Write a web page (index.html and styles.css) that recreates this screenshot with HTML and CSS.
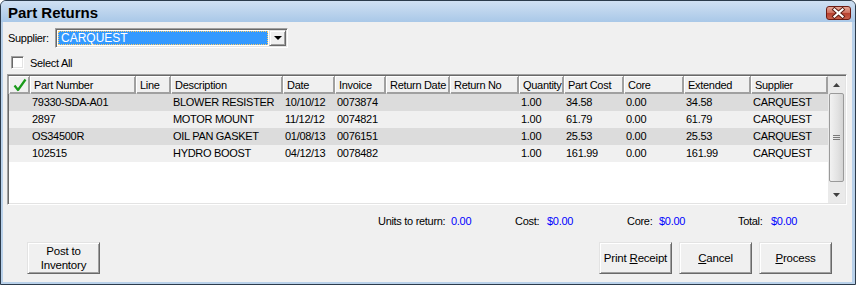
FILE: index.html
```html
<!DOCTYPE html>
<html>
<head>
<meta charset="utf-8">
<link rel="stylesheet" href="styles.css">
</head>
<body>
<div class="window">
  <div class="titlebar">
    <span class="title">Part Returns</span>
    <span class="close">
      <svg width="25" height="14" viewBox="0 0 25 14">
        <path d="M8.5 3.5 L16.5 10.5 M16.5 3.5 L8.5 10.5" stroke="#5a1a12" stroke-width="4" stroke-linecap="square"/>
        <path d="M8.5 3.5 L16.5 10.5 M16.5 3.5 L8.5 10.5" stroke="#ffffff" stroke-width="2.2" stroke-linecap="square"/>
      </svg>
    </span>
  </div>
  <div class="content">
    <div class="supplier-row">
      <span class="label">Supplier:</span>
      <div class="combo">
        <div class="combo-field"><span class="combo-sel">CARQUEST</span></div>
        <div class="combo-btn"><span class="tri"></span></div>
      </div>
    </div>
    <div class="selectall-row">
      <span class="checkbox"></span>
      <span class="cb-label">Select All</span>
    </div>
    <div class="grid">
      <div class="list">
        <div class="hrow">
          <div class="hc c0">
            <svg width="14" height="14" viewBox="0 0 14 14"><path d="M1.5 7.5 L5 12 L12.5 1.5" fill="none" stroke="#1a9a1a" stroke-width="2.2" stroke-linejoin="round"/></svg>
          </div>
          <div class="hc c1">Part Number</div>
          <div class="hc c2">Line</div>
          <div class="hc c3">Description</div>
          <div class="hc c4">Date</div>
          <div class="hc c5">Invoice</div>
          <div class="hc c6">Return Date</div>
          <div class="hc c7">Return No</div>
          <div class="hc c8">Quantity</div>
          <div class="hc c9">Part Cost</div>
          <div class="hc c10">Core</div>
          <div class="hc c11">Extended</div>
          <div class="hc c12">Supplier</div>
        </div>
        <div class="row dark">
          <div class="dc c0"></div><div class="dc c1">79330-SDA-A01</div><div class="dc c2"></div><div class="dc c3">BLOWER RESISTER</div><div class="dc c4">10/10/12</div><div class="dc c5">0073874</div><div class="dc c6"></div><div class="dc c7"></div><div class="dc c8">1.00</div><div class="dc c9">34.58</div><div class="dc c10">0.00</div><div class="dc c11">34.58</div><div class="dc c12">CARQUEST</div>
        </div>
        <div class="row light">
          <div class="dc c0"></div><div class="dc c1">2897</div><div class="dc c2"></div><div class="dc c3">MOTOR MOUNT</div><div class="dc c4">11/12/12</div><div class="dc c5">0074821</div><div class="dc c6"></div><div class="dc c7"></div><div class="dc c8">1.00</div><div class="dc c9">61.79</div><div class="dc c10">0.00</div><div class="dc c11">61.79</div><div class="dc c12">CARQUEST</div>
        </div>
        <div class="row dark">
          <div class="dc c0"></div><div class="dc c1">OS34500R</div><div class="dc c2"></div><div class="dc c3">OIL PAN GASKET</div><div class="dc c4">01/08/13</div><div class="dc c5">0076151</div><div class="dc c6"></div><div class="dc c7"></div><div class="dc c8">1.00</div><div class="dc c9">25.53</div><div class="dc c10">0.00</div><div class="dc c11">25.53</div><div class="dc c12">CARQUEST</div>
        </div>
        <div class="row light">
          <div class="dc c0"></div><div class="dc c1">102515</div><div class="dc c2"></div><div class="dc c3">HYDRO BOOST</div><div class="dc c4">04/12/13</div><div class="dc c5">0078482</div><div class="dc c6"></div><div class="dc c7"></div><div class="dc c8">1.00</div><div class="dc c9">161.99</div><div class="dc c10">0.00</div><div class="dc c11">161.99</div><div class="dc c12">CARQUEST</div>
        </div>
      </div>
      <div class="scrollbar">
        <div class="sb-arrow"><svg width="7" height="4" viewBox="0 0 7 4"><path d="M0 4 L3.5 0 L7 4 Z" fill="#404040"/></svg></div>
        <div class="sb-track">
          <div class="sb-thumb">
            <span class="grip"></span><span class="grip"></span><span class="grip"></span>
          </div>
        </div>
        <div class="sb-arrow"><svg width="7" height="4" viewBox="0 0 7 4"><path d="M0 0 L7 0 L3.5 4 Z" fill="#404040"/></svg></div>
      </div>
    </div>
    <div class="totals">
      <span class="t-label w1">Units to return:</span><span class="t-val v1">0.00</span>
      <span class="t-label w2">Cost:</span><span class="t-val v2">$0.00</span>
      <span class="t-label w3">Core:</span><span class="t-val v3">$0.00</span>
      <span class="t-label w4">Total:</span><span class="t-val">$0.00</span>
    </div>
    <div class="buttons">
      <button class="btn">Post to<br>Inventory</button>
      <span class="spacer"></span>
      <button class="btn">Print <u>R</u>eceipt</button>
      <button class="btn"><u>C</u>ancel</button>
      <button class="btn"><u>P</u>rocess</button>
    </div>
  </div>
</div>
</body>
</html>
```

FILE: styles.css
```css
* { box-sizing: border-box; }
html, body { margin: 0; padding: 0; background: #ffffff; }
body {
  font-family: "Liberation Sans", Arial, sans-serif;
  font-size: 11px;
  letter-spacing: -0.3px;
  color: #000;
}
.window {
  width: 856px;
  height: 285px;
  border: 1px solid #2c3b4b;
  border-radius: 6px 6px 0 0;
  background: #b9d1ea;
  display: flex;
  flex-direction: column;
  overflow: hidden;
}
.titlebar {
  height: 21px;
  flex: none;
  background: linear-gradient(#d0e0f2, #a9c8e8);
  display: flex;
  align-items: center;
  padding: 0 4px 0 7px;
}
.title {
  font-size: 15px;
  font-weight: bold;
  letter-spacing: 0;
  flex: 1;
  padding-top: 1px;
}
.close {
  width: 25px;
  height: 14px;
  margin-top: 3px;
  border: 1px solid #6e1c14;
  border-radius: 3px;
  background: linear-gradient(#e6a898, #cf6d5c 50%, #b8402f 51%, #c8604c);
  display: flex;
}
.close svg { display: block; margin: -1px; }
.content {
  flex: 1;
  margin: 0 3px 2px 2px;
  background: #f0f0f0;
  padding: 0 20px 0 4px;
  display: flex;
  flex-direction: column;
}
.supplier-row {
  margin-top: 6px;
  height: 20px;
  display: flex;
  align-items: center;
}
.label { margin-left: 1px; width: 47px; }
.combo {
  width: 233px;
  height: 20px;
  border-style: solid;
  border-width: 1px;
  border-color: #a0a0a0 #ffffff #ffffff #a0a0a0;
  box-shadow: inset 1px 1px 0 #696969, inset -1px -1px 0 #e3e3e3;
  background: #fff;
  display: flex;
  padding: 1px;
}
.combo-field {
  flex: 1;
  padding: 1px;
}
.combo-sel {
  display: block;
  height: 100%;
  background: #3399ff;
  color: #fff;
  outline: 1px dotted #ffcc66;
  outline-offset: -1px;
  padding-left: 3px;
  line-height: 15px;
  font-size: 12px;
  letter-spacing: 0;
}
.combo-btn {
  width: 17px;
  background: #f0f0f0;
  border-style: solid;
  border-width: 1px;
  border-color: #e3e3e3 #696969 #696969 #e3e3e3;
  box-shadow: inset 1px 1px 0 #fff, inset -1px -1px 0 #a0a0a0;
  display: flex;
  align-items: center;
  justify-content: center;
}
.tri {
  width: 0; height: 0;
  border-left: 4px solid transparent;
  border-right: 4px solid transparent;
  border-top: 4px solid #000;
}
.selectall-row {
  margin-top: 8px;
  height: 13px;
  display: flex;
  align-items: center;
}
.checkbox {
  width: 13px;
  height: 13px;
  margin-left: 4px;
  background: #fff;
  border-style: solid;
  border-width: 1px;
  border-color: #a0a0a0 #ffffff #ffffff #a0a0a0;
  box-shadow: inset 1px 1px 0 #696969, inset -1px -1px 0 #e3e3e3;
}
.cb-label { margin-left: 6px; }
.grid {
  margin-top: 5px;
  width: 840px;
  height: 131px;
  border-style: solid;
  border-width: 1px;
  border-color: #a0a0a0 #ffffff #ffffff #a0a0a0;
  box-shadow: inset 1px 1px 0 #696969, inset -1px -1px 0 #e3e3e3;
  background: #fff;
  padding: 1px;
  display: flex;
}
.list {
  width: 819px;
  display: flex;
  flex-direction: column;
}
.hrow, .row { display: flex; }
.hrow { height: 18px; background: #f0f0f0; }
.hc {
  height: 18px;
  line-height: 16px;
  padding-left: 3px;
  white-space: nowrap;
  overflow: hidden;
  border: 1px solid #a0a0a0;
  border-left-color: #ffffff;
  border-top-color: #ffffff;
  box-shadow: inset -1px -1px 0 #a0a0a0, -1px 0 0 #a0a0a0;
}
.hc.c0 { display: flex; align-items: center; justify-content: center; padding: 0 0 1px 1px; }
.row { height: 17px; }
.row.dark { background: #dcdcdc; }
.row.light { background: #f0f0f0; }
.dc {
  line-height: 17px;
  padding-left: 2px;
  white-space: nowrap;
  overflow: hidden;
}
.c0 { width: 21px; }
.c1 { width: 106px; }
.c2 { width: 35px; }
.c3 { width: 112px; }
.c4 { width: 52px; }
.c5 { width: 51px; }
.c6 { width: 64px; }
.c7 { width: 69px; }
.c8 { width: 45px; }
.c9 { width: 60px; }
.c10 { width: 60px; }
.c11 { width: 67px; }
.c12 { width: 77px; }
.scrollbar {
  width: 17px;
  background: #eaeaea;
  display: flex;
  flex-direction: column;
}
.sb-arrow {
  height: 17px;
  display: flex;
  align-items: center;
  justify-content: center;
}
.sb-track {
  flex: 1;
  padding: 0 1px;
  display: flex;
}
.sb-thumb {
  flex: 1;
  margin-bottom: 4px;
  border: 1px solid #9a9a9a;
  border-radius: 2px;
  background: linear-gradient(to right, #f2f2f2, #e2e2e2 60%, #d4d4d4);
  display: flex;
  flex-direction: column;
  align-items: center;
  justify-content: center;
  gap: 1px;
}
.grip {
  width: 7px;
  height: 1px;
  background: #7a7a7a;
}
.totals {
  margin-top: 9px;
  height: 14px;
  line-height: 14px;
  display: flex;
  padding-left: 371px;
  white-space: nowrap;
}
.t-val { color: #0000ff; }
.w1 { width: 73px; }
.v1 { width: 64px; }
.w2 { width: 32px; }
.v2 { width: 80px; }
.w3 { width: 32px; }
.v3 { width: 79px; }
.w4 { width: 33px; }
.buttons {
  margin-top: 14px;
  display: flex;
  gap: 7px;
  padding-left: 20px;
}
.spacer { flex: 1; }
.btn {
  width: 73px;
  height: 32px;
  font-family: "Liberation Sans", Arial, sans-serif;
  font-size: 11.5px;
  letter-spacing: -0.2px;
  line-height: 14px;
  color: #000;
  background: #f0f0f0;
  padding: 0;
  border-style: solid;
  border-width: 1px;
  border-color: #e3e3e3 #696969 #696969 #e3e3e3;
  box-shadow: inset 1px 1px 0 #ffffff, inset -1px -1px 0 #a0a0a0;
}
```
